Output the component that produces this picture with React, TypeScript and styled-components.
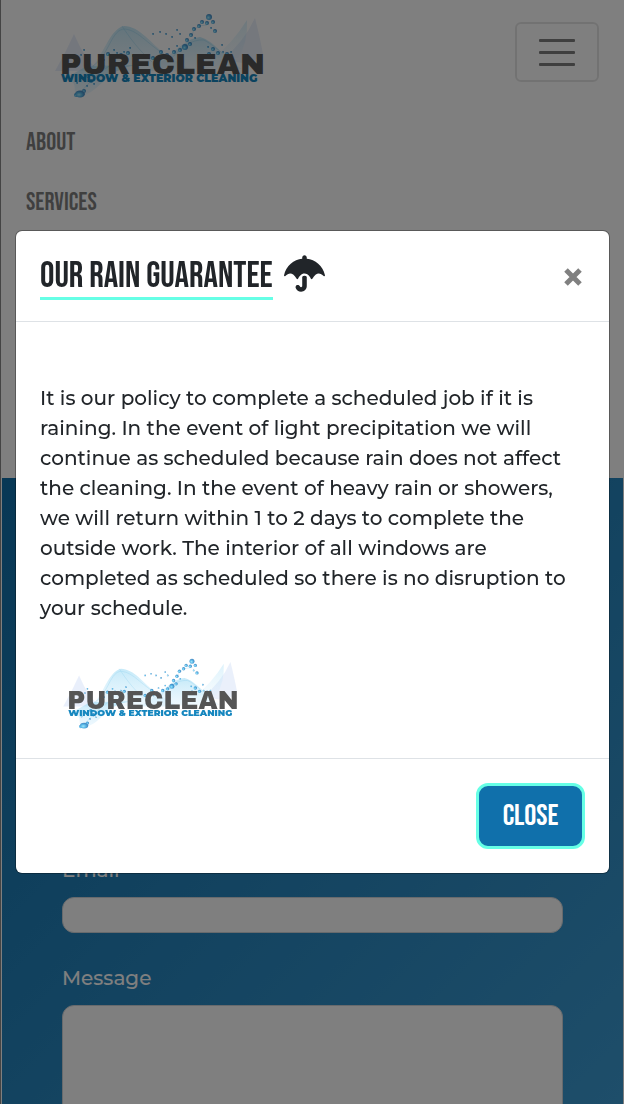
import React, { useId } from "react";
import styled, { createGlobalStyle } from "styled-components";
import { FaUmbrella } from "react-icons/fa";

const display = `"Bebas Neue", "Liberation Sans Narrow", "Liberation Sans", sans-serif`;
const body = `Montserrat, Inter, "Liberation Sans", sans-serif`;

const GlobalStyle = createGlobalStyle`
  *, *::before, *::after { box-sizing: border-box; }
  html { overflow: hidden; }
  body {
    margin: 0;
    background: #fff;
    color: #212529;
    font-family: ${body};
    font-size: 20px;
    font-weight: 500;
    line-height: 30px;
  }
`;

const Page = styled.div`
  height: 100vh;
  overflow: hidden;
  padding-right: 1px;
  border-left: 1px solid #888;
  background: #fff;
`;

const Navbar = styled.header`
  height: 478px;
  margin-left: 1px;
`;

const NavTop = styled.div`
  display: flex;
  align-items: flex-start;
  justify-content: space-between;
  padding: 0 24px 0 38px;
`;

const Toggler = styled.button`
  display: flex;
  flex-direction: column;
  align-items: center;
  justify-content: center;
  gap: 9px;
  width: 84px;
  height: 60px;
  margin-top: 22px;
  border: 2px solid rgba(0, 0, 0, 0.1);
  border-radius: 6px;
  background: transparent;
`;

const Bar = styled.span`
  width: 36px;
  height: 3px;
  border-radius: 1px;
  background: rgba(0, 0, 0, 0.5);
`;

const NavList = styled.nav`
  display: flex;
  flex-direction: column;
  padding: 3px 24px;
`;

const NavLink = styled.a`
  font: 400 25px / 60px ${display};
  color: rgba(0, 0, 0, 0.5);
  text-decoration: none;
  text-transform: uppercase;
`;

const Contact = styled.section`
  margin-left: 1px;
  padding: 377px 60px 60px;
  background: linear-gradient(135deg, #1070ab 0%, #42a2da 100%);
`;

const Form = styled.form`
  display: flex;
  flex-direction: column;
  gap: 30px;
`;

const Field = styled.div`
  display: flex;
  flex-direction: column;
  gap: 12px;
  color: #fff;

  input,
  textarea {
    width: 100%;
    height: 36px;
    padding: 6px 12px;
    border: 1px solid #ced4da;
    border-radius: 12px;
    background: #fff;
    font: inherit;
    resize: none;
  }

  textarea {
    height: 200px;
  }
`;

const Backdrop = styled.div`
  position: fixed;
  inset: 0;
  padding: 231px 15px 0 16px;
  background: rgba(0, 0, 0, 0.5);
`;

const Dialog = styled.div`
  border-radius: 6px;
  background: #fff;
  box-shadow: 0 0 0 1px rgba(0, 0, 0, 0.3);
`;

const DialogHeader = styled.div`
  display: flex;
  align-items: flex-start;
  gap: 11px;
  height: 91px;
  padding: 21px 24px;
  border-bottom: 1px solid #dee2e6;
`;

const Title = styled.h2`
  margin: 0;
  padding-top: 4px;
  border-bottom: 3px solid #66ffe6;
  font: 400 36px / 41px ${display};
  text-transform: uppercase;
`;

const Umbrella = styled(FaUmbrella)`
  width: 41px;
  height: 37px;
  margin-top: 3px;
`;

const Dismiss = styled.button`
  margin: 10px 0 0 auto;
  padding: 0 2px;
  border: 0;
  background: transparent;
  color: #808080;
  line-height: 0;
`;

const DialogBody = styled.div`
  padding: 61px 24px 19px;

  p {
    margin: 0 0 24px;
  }
`;

const BodyLogo = styled.div`
  display: flex;
  padding-left: 10px;
`;

const DialogFooter = styled.div`
  display: flex;
  justify-content: flex-end;
  padding: 24px;
  border-top: 1px solid #dee2e6;
`;

const CloseButton = styled.button`
  width: 109px;
  height: 66px;
  border: 3px solid #66ffe6;
  border-radius: 12px;
  background: #1070ab;
  color: #fff;
  font: 400 30px / 45px ${display};
  text-transform: uppercase;
`;

/* Droplets thrown off the wave: x, y, radius */
const drops: [number, number, number][] = [
  [209, 17, 3], [213, 22, 2], [207, 23, 2], [215, 31, 2], [211, 28, 1], [202, 22, 2],
  [199, 26, 2], [194, 29, 2], [191, 35, 2], [187, 40, 2], [190, 44, 2], [185, 47, 3],
  [180, 50, 2], [177, 46, 1], [174, 52, 2], [169, 49, 1], [167, 55, 2], [161, 52, 2],
  [163, 58, 1], [153, 58, 2], [149, 55, 1], [195, 38, 1], [208, 47, 1], [213, 49, 2],
  [218, 53, 2], [223, 52, 1], [227, 54, 2], [231, 52, 1], [222, 45, 1], [209, 54, 2],
  [130, 48, 1], [128, 53, 2], [124, 52, 1], [121, 55, 2], [117, 53, 1], [113, 57, 2],
  [108, 54, 2], [133, 56, 1], [114, 50, 1], [104, 60, 1], [84, 50, 1], [81, 55, 1],
  [153, 34, 1], [160, 32, 1], [166, 34, 1], [172, 37, 1], [180, 34, 1], [177, 30, 1],
  [88, 76, 2], [91, 81, 2], [94, 84, 1], [87, 86, 1], [84, 91, 2], [77, 83, 1], [76, 95, 2],
];

function Logo({ width, height }: { width: number; height: number }) {
  const id = useId();
  const wave = `${id}-wave`;
  const drop = `${id}-drop`;
  return (
    <svg width={width} height={height} viewBox="40 0 240 110" role="img" aria-label="Pureclean Window & Exterior Cleaning">
      <defs>
        <linearGradient id={wave} x1="0" y1="0" x2="0" y2="1">
          <stop offset="0" stopColor="#9fdcf5" stopOpacity="0.6" />
          <stop offset="1" stopColor="#c6e8fb" stopOpacity="0.25" />
        </linearGradient>
        <radialGradient id={drop} cx="0.4" cy="0.6">
          <stop offset="0" stopColor="#8fe2fb" />
          <stop offset="0.6" stopColor="#35a9e2" />
          <stop offset="1" stopColor="#2379bd" />
        </radialGradient>
      </defs>
      <path d="M55 71 Q66 52 74 34 Q79 46 87 59 L99 71Z" fill="#d3e0f7" opacity=".5" />
      <path d="M222 60 Q244 42 255 18 Q260 38 263 54 L250 64Z" fill="#d6e2f8" opacity=".5" />
      <path d="M213 58 Q232 44 247 20 Q248 43 238 58Z" fill={`url(#${wave})`} opacity=".6" />
      <path d="M89 70 C103 58 109 29 124 26 C139 26 151 43 166 55 L194 72Z" fill={`url(#${wave})`} />
      <path d="M142 71 C167 65 180 39 200 37 C215 41 223 57 242 69Z" fill={`url(#${wave})`} />
      <path d="M62 80 C83 80 69 92 79 97 C105 90 102 70 137 65 L87 66Z" fill={`url(#${wave})`} />
      <g fill="none" stroke="#73c4e9" strokeWidth=".7" opacity=".4">
        <path d="M93 66 C110 54 111 29 125 29 C140 31 147 45 172 59" />
        <path d="M122 26 C130 38 137 48 152 62" />
        <path d="M170 60 C181 47 192 39 204 40 C212 44 218 51 232 59" />
        <path d="M74 95 C86 91 91 76 111 65" />
        <path d="M192 35 Q194 25 207 25" />
      </g>
      <g fill={`url(#${drop})`} opacity=".8">
        {drops.map(([x, y, r], i) => (
          <circle key={i} cx={x} cy={y} r={r} />
        ))}
        <ellipse cx="80" cy="94" rx="5" ry="3.5" />
      </g>
      <text x="60" y="74" fontFamily="'Archivo Black', Montserrat, sans-serif" fontWeight="400" fontSize="30" fill="#555">
        PURECLEAN
      </text>
      <text x="61" y="82" fontFamily="Montserrat, sans-serif" fontWeight="900" fontSize="11" fill="#1687bf">
        WINDOW &amp; EXTERIOR CLEANING
      </text>
    </svg>
  );
}

export default function App() {
  return (
    <>
      <GlobalStyle />
      <Page>
        <Navbar>
          <NavTop>
            <Logo width={240} height={110} />
            <Toggler type="button" aria-label="Toggle navigation">
              <Bar />
              <Bar />
              <Bar />
            </Toggler>
          </NavTop>
          <NavList>
            <NavLink href="#about">About</NavLink>
            <NavLink href="#services">Services</NavLink>
          </NavList>
        </Navbar>
        <Contact>
          <Form>
            <Field>
              <label htmlFor="email">Email</label>
              <input id="email" type="email" />
            </Field>
            <Field>
              <label htmlFor="message">Message</label>
              <textarea id="message" />
            </Field>
          </Form>
        </Contact>
      </Page>
      <Backdrop>
        <Dialog role="dialog" aria-modal="true" aria-labelledby="rain-title">
          <DialogHeader>
            <Title id="rain-title">Our Rain Guarantee</Title>
            <Umbrella aria-hidden="true" />
            <Dismiss type="button" aria-label="Close">
              <svg width="20" height="30" viewBox="0 0 20 30" stroke="currentColor" strokeWidth="5">
                <path d="M3 8 L17 22 M17 8 L3 22" />
              </svg>
            </Dismiss>
          </DialogHeader>
          <DialogBody>
            <p>
              It is our policy to complete a scheduled job if it is raining. In the event of light
              precipitation we will continue as scheduled because rain does not affect the cleaning.
              In the event of heavy rain or showers, we will return within 1 to 2 days to complete
              the outside work. The interior of all windows are completed as scheduled so there is
              no disruption to your schedule.
            </p>
            <BodyLogo>
              <Logo width={202} height={92} />
            </BodyLogo>
          </DialogBody>
          <DialogFooter>
            <CloseButton type="button">Close</CloseButton>
          </DialogFooter>
        </Dialog>
      </Backdrop>
    </>
  );
}
